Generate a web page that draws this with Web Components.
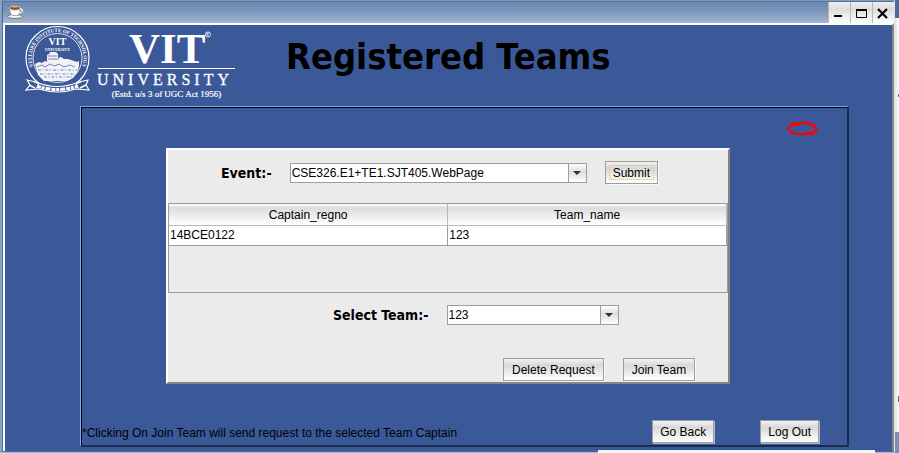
<!DOCTYPE html>
<html lang="en">
<head>
<meta charset="utf-8">
<title>Registered Teams</title>
<style>
html,body{height:100%}
body{margin:0;font:12px/16px "Liberation Sans",Arial,sans-serif;color:#000;background:#eef0f4}
</style>
</head>
<body>
<app-window>
  <brand-header slot="header">Registered Teams</brand-header>
  <sunken-panel>
    <refresh-button slot="tool"></refresh-button>
    <raised-card>
      <form-row class="event" style="--start:53px;--top:11px">
        <combo-field label="Event:-" value="CSE326.E1+TE1.SJT405.WebPage" style="--w:297px"></combo-field>
        <push-button focused>Submit</push-button>
      </form-row>
      <team-table></team-table>
      <form-row style="--start:165px;--top:12px">
        <combo-field label="Select Team:-" value="123" style="--w:172px"></combo-field>
      </form-row>
      <form-row style="--start:335px;--top:33px">
        <push-button>Delete Request</push-button>
        <push-button>Join Team</push-button>
      </form-row>
    </raised-card>
    <span slot="note">*Clicking On Join Team will send request to the selected Team Captain</span>
    <push-button slot="action">Go Back</push-button>
    <push-button slot="action">Log Out</push-button>
  </sunken-panel>
</app-window>
<script>
const define = (name, html, setup) => customElements.define(name, class extends HTMLElement {
  constructor() {
    super();
    this.attachShadow({mode: 'open'}).innerHTML = html;
  }
  connectedCallback() { if (setup) setup(this, this.shadowRoot); }
});

define('app-window', `
<style>
:host{display:flex;box-sizing:border-box;min-height:100vh;padding-right:4px;
 background:linear-gradient(#4a6a9b,#4a6a9b) right 0 top 0/4px 18px no-repeat,
  linear-gradient(#008cff,#008cff) right 0 top 94px/1px 3px no-repeat,
  linear-gradient(#667,#667) right 0 top 396px/1px 6px no-repeat,
  linear-gradient(90deg,#d8d8d8,#fff) right 0 top 0/5px 432px no-repeat,#7890b4}
.frame{flex:1;display:flex;flex-direction:column;border:solid;border-width:1px 1px 1px 2px;border-color:#8298b8 #e6e6e6 #a5b7d0 #8aa3c0;background:#4a6b9e;padding:0 0 1px 1px}
.bar{display:flex;justify-content:space-between;height:22px;border-top:1px solid #54739f;box-sizing:border-box;background:linear-gradient(#6b8ab3,#7893b9 40%,#a5b7d2)}
.java{width:17px;height:17px;margin:1px 0 0 4px}
.ctl{display:flex;gap:1px;background:#b8b8b8;padding-left:1px}
button{width:21px;padding:0;border:0;background:linear-gradient(#eee,#dcdcdc 35%,#fff);display:grid;place-items:center}
.body{flex:1;display:flex;flex-direction:column;background:#3b5998;border:solid;border-width:2px 2px 0 2px;border-color:#fff #858585 #777 #fff}
.strip{position:absolute;left:66.5%;right:24px;bottom:0;height:3px;background:#f4f5f7}
</style>
<div class="frame">
 <div class="bar">
  <svg class="java" viewBox="0 0 17 17"><ellipse cx="8" cy="13.4" rx="7.3" ry="2.1" fill="#eee" stroke="#555" stroke-width=".7"/><path d="M3 5C3 10 5 13.5 8 13.5S12.500 10 13 5Z" fill="#fff"/><path d="M12.500 6c4-.7 4 3.500-1 4" fill="none" stroke="#e5e5e5" stroke-width="1.500"/><ellipse cx="8" cy="5.200" rx="5" ry="2" fill="#8b3d12" stroke="#f8ddbd" stroke-width=".8"/><path d="M6 5q2-2 4 0" stroke="#eda461" fill="none"/><path d="M5 12.500h7" stroke="#888" stroke-width=".7"/></svg>
  <div class="ctl">
   <button aria-label="Minimize"><svg width="21" height="21"><path d="M5 14h8" stroke="#000" stroke-width="2"/></svg></button>
   <button aria-label="Maximize"><svg width="21" height="21"><path d="M5.500 7.500h10v8h-10z" fill="none" stroke="#000"/><path d="M5 8h11" stroke="#000" stroke-width="2"/></svg></button>
   <button aria-label="Close"><svg width="21" height="21"><path d="M5 7l9 9M14 7l-9 9" stroke="#000" stroke-width="2.200"/></svg></button>
  </div>
 </div>
 <div class="body"><slot name="header"></slot><slot></slot></div>
</div>
<div class="strip"></div>`);

define('brand-header', `
<style>
:host{display:flex;align-items:flex-start;height:81px;box-sizing:border-box}
svg{display:block;flex:none;width:216px;height:76px;margin-left:15px;font-family:"Liberation Serif",serif}
h1{margin:10px 0 0 50px;font:bold 36px/44px "DejaVu Sans Condensed","DejaVu Sans",sans-serif;white-space:nowrap}
</style>
<svg viewBox="0 0 216 76" fill="#fff" role="img" aria-label="VIT University">
 <defs><path id="ring" d="M17.500 49.600A26 26 0 1 1 57.500 49.600"/></defs>
 <g fill="none" stroke="#fff"><circle cx="37.500" cy="33" r="31.500" stroke-width="1.200"/><circle cx="37.500" cy="33" r="24.500" stroke-width=".8"/></g>
 <text font-size="5" font-weight="bold"><textPath href="#ring" startOffset="50%" text-anchor="middle">VELLORE INSTITUTE OF TECHNOLOGY</textPath></text>
 <text x="37.500" y="20" font-size="10" font-weight="bold" text-anchor="middle">VIT</text>
 <text x="37.500" y="26" font-size="4" font-weight="bold" text-anchor="middle">UNIVERSITY</text>
 <path d="M15 39l4-2 3 1 3-2 2 1V30l2-1 1-2h6l2 2v4l3-1 3 2 4 0 3 1 6 2 2-1v5l-2 7-4 5-6 3H24l-6-6z" opacity=".93"/>
 <g stroke="#3b5998" fill="none" stroke-width=".7"><path d="M28 31h9M28 34h11M17 42l5-2 3 2 5-3 4 2 5-2 5 3 6-2 5 2"/><path d="M18 45h39M20 49h35M24 52h28" stroke-dasharray="3 1.500 1 2"/></g>
 <path d="M7 55l9 2q21 9 43 0l9-2-2 5 3 5-13-1q-18 6-37 0l-13 1 4-5z" fill="#3b5998" stroke="#fff" stroke-width="1.200"/>
 <path d="M17 61q20 7 41 0" fill="none" stroke="#fff" stroke-width="3" stroke-dasharray="4 .8 3 1 5 1"/>
 <path d="M9 60l6 3M66 60l-6 3" fill="none" stroke="#fff" stroke-width="1.500"/>
 <path d="M14 57l5 2-3 5M61 57l-5 2 3 5" fill="none" stroke="#fff"/>
 <text x="109" y="38" font-size="43" font-weight="bold">VIT</text>
 <circle cx="188" cy="9.500" r="2.600" fill="none" stroke="#fff" stroke-width=".8"/><path d="M187 11V8h1.500q1 1-1.500 1.500l2 1.500" fill="none" stroke="#fff" stroke-width=".6"/>
 <path d="M78 43.500h137" stroke="#fff"/>
 <text x="77" y="60" font-size="16" letter-spacing="4" stroke="#fff" stroke-width=".3">UNIVERSITY</text>
 <text x="146.500" y="72" font-size="9" stroke="#fff" stroke-width=".2" text-anchor="middle">(Estd. u/s 3 of UGC Act 1956)</text>
</svg>
<h1><slot></slot></h1>`);

define('sunken-panel', `
<style>
:host{flex:1;display:flex;flex-direction:column;margin:0 43px 4px 75px;border:solid;border-width:1px 2px 2px 1px;border-color:#74aefa #1c2c4b #1c2c4b #74aefa;box-shadow:inset 1px 1px #000}
.tool{display:flex;justify-content:flex-end;padding:14px 29px 12px}
.foot{margin-top:auto;display:flex;align-items:flex-end;padding-left:1px;padding-right:27px;padding-bottom:1px}
.note{flex:1;line-height:22px;font-size:12px}
.acts{display:flex;gap:45px}
</style>
<div class="tool"><slot name="tool"></slot></div>
<slot></slot>
<div class="foot"><div class="note"><slot name="note"></slot></div><div class="acts"><slot name="action"></slot></div></div>`);

define('refresh-button', `
<style>:host{display:block}button{display:block;padding:0;border:0;background:none}svg{display:block}</style>
<button aria-label="Refresh"><svg width="31" height="15" viewBox="0 0 31 15"><path fill="#fb0007" d="M4 .5L7 2C15-.5 30 1 30.500 8c0 2-1 3.500-3 4l-1-1c1-1 1.500-2 1.500-3C27 4 17 2.500 11 3.500L14 4.500 4 5.500zM27 15l-3-1.500C16 15.500.5 14 .5 8 .5 6 1.500 5 3.500 4l1 1.500C3.500 6.500 3 7 3 8c1 4 11 5 17 4L17 11l10-1z"/></svg></button>`);

define('raised-card', `
<style>:host{display:block;margin:0 117px 0 85px;min-height:232px;background:#ebebeb;border:2px solid;border-color:#fff #85857f #85857f #fff}</style>
<slot></slot>`);

define('form-row', `
<style>:host{display:flex;align-items:center;gap:18px;padding:var(--top) 0 0 var(--start)}:host(.event){padding-bottom:18px}</style>
<slot></slot>`);

define('combo-field', `
<style>
:host{display:flex;align-items:center;gap:18px}
label{font:bold 14px/20px "DejaVu Sans Condensed","DejaVu Sans",sans-serif;white-space:nowrap}
select{appearance:none;box-sizing:border-box;width:var(--w);height:20px;margin:0;padding:0 20px 0 1px;border:1px solid #9a9da3;border-radius:0;color:#000;font:12px/18px "Liberation Sans",Arial,sans-serif;
 background:url("data:image/svg+xml,%3Csvg xmlns='http://www.w3.org/2000/svg' width='18' height='18'%3E%3Cpath d='M5 7h8l-4 4z' fill='%23333'/%3E%3C/svg%3E") right 0 top 0 no-repeat,
 linear-gradient(#fff,#ddd 45%,#fff) right 0 top 0/17px 18px no-repeat,
 linear-gradient(#9a9da3,#9a9da3) right 17px top 0/1px 18px no-repeat,#fff}
</style>
<label for="c"></label><select id="c"></select>`, (el, root) => {
  root.querySelector('label').textContent = el.getAttribute('label');
  root.querySelector('select').replaceChildren(new Option(el.getAttribute('value')));
});

define('push-button', `
<style>
:host{display:block}
button{display:block;position:relative;box-sizing:border-box;height:23px;margin:0 1px 1px 0;padding:1px 8px 0;border:1px solid #9a9da3;border-radius:0;box-shadow:1px 1px #f8fafc;background:linear-gradient(#f3f3f3,#d8d8d8 30%,#fff);color:#000;font:12px/20px "Liberation Sans",Arial,sans-serif;white-space:nowrap}
:host([focused]) button{padding:1px 7px 0}
:host([focused]) button::after{content:"";position:absolute;inset:3px;border:1px dotted #e6bd4a}
:host([slot]) button{padding:1px 7px 0;box-shadow:1px 1px #a9bad8}
</style>
<button><slot></slot></button>`);

define('team-table', `
<style>
:host{display:block;height:90px;box-sizing:border-box;border:1px solid #9a9da3}
table{width:100%;border-collapse:collapse;table-layout:fixed}
th{height:21px;padding:1px 0 0;font-weight:normal;background:linear-gradient(#fff,#dcdcdc 18%,#fff);border-right:1px solid #b5bbc2;border-bottom:1px solid #b5bbc2;box-sizing:border-box}
td{height:20px;box-sizing:border-box;padding:0 0 0 1px;background:#fff;border-right:1px solid #9a9da3;border-bottom:1px solid #9a9da3}
</style>
<table><thead><tr><th>Captain_regno</th><th>Team_name</th></tr></thead><tbody><tr><td>14BCE0122</td><td>123</td></tr></tbody></table>`);
</script>
</body>
</html>
